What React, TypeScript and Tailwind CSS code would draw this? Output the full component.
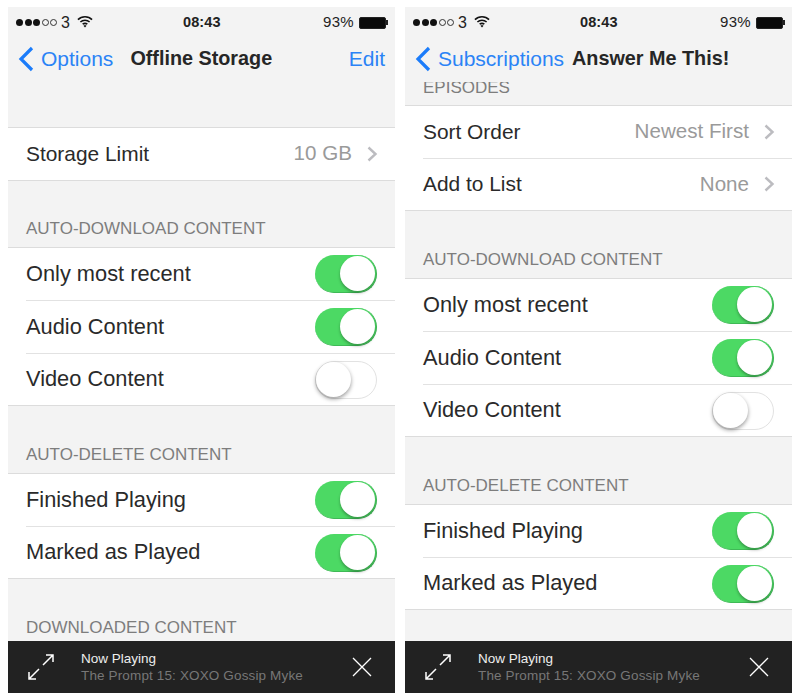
import React from "react";

function Toggle({ on }: { on: boolean }) {
  return (
    <div
      className={
        on
          ? "relative w-[62px] h-[38px] rounded-full bg-[#4cd964] border-r border-b border-[#3fb956]"
          : "relative w-[62px] h-[38px] rounded-full bg-white border border-[#e2e2e2]"
      }
    >
      <div
        className={
          on
            ? "absolute right-[1px] top-[1px] w-[35px] h-[35px] rounded-full bg-white shadow-[0_2px_3px_rgba(0,0,0,0.3)]"
            : "absolute left-[0px] top-[0px] w-[35px] h-[35px] rounded-full bg-white shadow-[0_2px_4px_rgba(0,0,0,0.4)]"
        }
      />
    </div>
  );
}

function Chevron() {
  return (
    <svg width="11" height="16" viewBox="0 0 11 16" fill="none" className="ml-[15px]">
      <path d="M1.5 1.5 L8.5 8 L1.5 14.5" stroke="#bcbcc0" strokeWidth="2.4" />
    </svg>
  );
}

function Row({ label, on, last }: { label: string; on: boolean; last?: boolean }) {
  return (
    <div className={last ? "h-[51px] flex items-center" : "h-[53px] flex items-center border-b border-[#e2e2e2]"}>
      <span className="flex-1 text-[21.8px] text-[#2a2a2a]">{label}</span>
      <div className="mr-[18px]">
        <Toggle on={on} />
      </div>
    </div>
  );
}

function ValueRow({ label, value, rowClass }: { label: string; value: string; rowClass: string }) {
  return (
    <div className={"flex items-center pb-[1px] " + rowClass}>
      <span className="flex-1 text-[20.9px] text-[#2a2a2a]">{label}</span>
      <span className="text-[20.6px] text-[#9a9a9a]">{value}</span>
      <div className="mr-[17px] flex">
        <Chevron />
      </div>
    </div>
  );
}

function Group({ children }: { children: React.ReactNode }) {
  return <div className="bg-white border-y border-[#dcdcdc] pl-[18px]">{children}</div>;
}

function Label({ children }: { children: React.ReactNode }) {
  return <div className="pl-[18px] text-[17px] leading-[20px] text-[#7d7d7d] mt-[39px] mb-[8px]">{children}</div>;
}

function Header({ back, title, right, titleClass }: { back: string; title: string; right?: string; titleClass: string }) {
  return (
    <div className="h-[73px] shrink-0">
      <div className="h-[31px] flex items-center pl-[8px] pr-[7px] text-[16px] text-[#222] relative">
        <div className="flex items-center gap-[1.5px]">
          {[0, 1, 2].map((i) => (
            <span key={i} className="w-[7px] h-[7px] rounded-full bg-[#111]" />
          ))}
          {[0, 1].map((i) => (
            <span key={i} className="w-[7px] h-[7px] rounded-full border border-[#333]" />
          ))}
        </div>
        <span className="ml-[4px]">3</span>
        <svg width="16" height="13" viewBox="0 0 17 13" fill="none" className="ml-[7px] mb-[3px]">
          <path d="M1 4.5 C5 0.5 12 0.5 16 4.5" stroke="#111" strokeWidth="1.7" />
          <path d="M3.6 7 C6.3 4.5 10.7 4.5 13.4 7" stroke="#111" strokeWidth="1.7" />
          <path d="M6 9.4 C7.4 8.3 9.6 8.3 11 9.4" stroke="#111" strokeWidth="1.7" />
          <path d="M8.5 13 L6.9 11 C7.8 10.4 9.2 10.4 10.1 11 Z" fill="#111" />
        </svg>
        <span className="absolute left-[175px] font-bold text-[14.5px] tracking-[0.1px]">08:43</span>
        <span className="ml-auto text-[15px] tracking-[0.3px]">93%</span>
        <div className="ml-[5px] flex items-center">
          <div className="w-[27px] h-[12px] bg-[#0a0a0a] rounded-[2px] border border-[#222]" />
          <div className="w-[2px] h-[5px] bg-[#222]" />
        </div>
      </div>
      <div className="h-[42px] flex items-center pl-[10px] pr-[10px] text-[21px]">
        <svg width="16" height="26" viewBox="0 0 16 26" fill="none" className="shrink-0">
          <path d="M14 2 L3 13 L14 24" stroke="#1b7cfa" strokeWidth="3.2" />
        </svg>
        <span className="ml-[7px] text-[#2b83f6]">{back}</span>
        <span className={"font-bold text-[#262626] text-[19.8px] " + titleClass}>{title}</span>
        {right ? <span className="ml-auto text-[#2b83f6]">{right}</span> : null}
      </div>
    </div>
  );
}

function Player() {
  return (
    <div className="h-[52px] shrink-0 bg-[#222222] flex items-center relative">
      <svg width="26" height="26" viewBox="0 0 26 26" fill="none" className="ml-[20px]">
        <path d="M15 11 L25 1 M18 1 H25 V8" stroke="#fff" strokeWidth="1.5" />
        <path d="M11 15 L1 25 M1 18 V25 H8" stroke="#fff" strokeWidth="1.5" />
      </svg>
      <div className="ml-[27px] flex-1">
        <div className="text-[13.5px] leading-[17px] text-[#eeeeee]">Now Playing</div>
        <div className="text-[13.5px] leading-[17px] text-[#777777] tracking-[0.14px]">The Prompt 15: XOXO Gossip Myke</div>
      </div>
      <svg width="20" height="20" viewBox="0 0 20 20" fill="none" className="mr-[23px]">
        <path d="M1 1 L19 19 M19 1 L1 19" stroke="#fff" strokeWidth="1.3" />
      </svg>
    </div>
  );
}

function LeftPhone() {
  return (
    <div className="w-[387px] h-[686px] bg-[#f3f3f3] flex flex-col overflow-hidden">
      <Header back="Options" title="Offline Storage" right="Edit" titleClass="ml-[17px]" />
      <div className="flex-1 overflow-hidden pt-[47px]">
        <Group>
          <ValueRow label="Storage Limit" value="10 GB" rowClass="h-[52px]" />
        </Group>
        <div className="pl-[18px] text-[17px] leading-[20px] text-[#7d7d7d] mt-[38px] mb-[8px]">AUTO-DOWNLOAD CONTENT</div>
        <Group>
          <Row label="Only most recent" on />
          <Row label="Audio Content" on />
          <Row label="Video Content" on={false} last />
        </Group>
        <Label>AUTO-DELETE CONTENT</Label>
        <Group>
          <Row label="Finished Playing" on />
          <Row label="Marked as Played" on last />
        </Group>
        <Label>DOWNLOADED CONTENT</Label>
      </div>
      <Player />
    </div>
  );
}

function RightPhone() {
  return (
    <div className="w-[387px] h-[686px] bg-[#f3f3f3] flex flex-col overflow-hidden">
      <Header back="Subscriptions" title="Answer Me This!" titleClass="ml-[8px]" />
      <div className="flex-1 overflow-hidden">
        <div className="mt-[2px] h-[17px] overflow-hidden flex items-end pb-[1px] pl-[18px] text-[17px] leading-[20px] text-[#7d7d7d]">
          <span>EPISODES</span>
        </div>
        <div className="bg-white border-y border-[#dcdcdc] pl-[18px] mt-[6px]">
          <ValueRow label="Sort Order" value="Newest First" rowClass="h-[53px] border-b border-[#e2e2e2]" />
          <ValueRow label="Add to List" value="None" rowClass="h-[51px]" />
        </div>
        <Label>AUTO-DOWNLOAD CONTENT</Label>
        <Group>
          <Row label="Only most recent" on />
          <Row label="Audio Content" on />
          <Row label="Video Content" on={false} last />
        </Group>
        <Label>AUTO-DELETE CONTENT</Label>
        <Group>
          <Row label="Finished Playing" on />
          <Row label="Marked as Played" on last />
        </Group>
      </div>
      <Player />
    </div>
  );
}

export default function App() {
  return (
    <div className="w-[800px] h-[700px] bg-white flex gap-[10px] pl-[8px] pt-[7px] font-['Liberation_Sans',Arial,sans-serif]">
      <LeftPhone />
      <RightPhone />
    </div>
  );
}
